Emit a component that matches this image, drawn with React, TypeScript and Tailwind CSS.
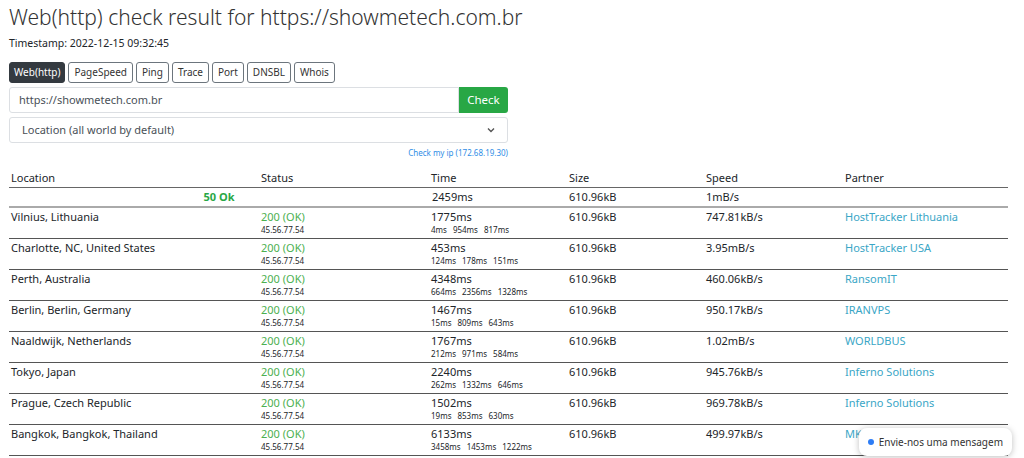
import React from 'react';

type Row = {
  location: string;
  time: string;
  parts: string[];
  speed: string;
  partner: string;
};

const rows: Row[] = [
  { location: 'Vilnius, Lithuania', time: '1775ms', parts: ['4ms', '954ms', '817ms'], speed: '747.81kB/s', partner: 'HostTracker Lithuania' },
  { location: 'Charlotte, NC, United States', time: '453ms', parts: ['124ms', '178ms', '151ms'], speed: '3.95mB/s', partner: 'HostTracker USA' },
  { location: 'Perth, Australia', time: '4348ms', parts: ['664ms', '2356ms', '1328ms'], speed: '460.06kB/s', partner: 'RansomIT' },
  { location: 'Berlin, Berlin, Germany', time: '1467ms', parts: ['15ms', '809ms', '643ms'], speed: '950.17kB/s', partner: 'IRANVPS' },
  { location: 'Naaldwijk, Netherlands', time: '1767ms', parts: ['212ms', '971ms', '584ms'], speed: '1.02mB/s', partner: 'WORLDBUS' },
  { location: 'Tokyo, Japan', time: '2240ms', parts: ['262ms', '1332ms', '646ms'], speed: '945.76kB/s', partner: 'Inferno Solutions' },
  { location: 'Prague, Czech Republic', time: '1502ms', parts: ['19ms', '853ms', '630ms'], speed: '969.78kB/s', partner: 'Inferno Solutions' },
  { location: 'Bangkok, Bangkok, Thailand', time: '6133ms', parts: ['3458ms', '1453ms', '1222ms'], speed: '499.97kB/s', partner: 'MK Solutions' },
];

const tabs = ['Web(http)', 'PageSpeed', 'Ping', 'Trace', 'Port', 'DNSBL', 'Whois'];

const App: React.FC = () => {
  return (
    <div className="relative h-[458px] overflow-hidden bg-white pl-[9px] text-[#212529]" style={{ fontFamily: '"Noto Sans", "Open Sans", sans-serif' }}>
      <h3 className="pt-[2px] text-[21px] font-light leading-[30px] text-[#333]">Web(http) check result for https://showmetech.com.br</h3>
      <div className="mt-[3px] text-[10.5px] leading-[16px]">Timestamp: 2022-12-15 09:32:45</div>

      <div className="mt-[11px] flex gap-[3px]">
        {tabs.map((t, i) => (
          <button
            key={t}
            className={
              i === 0
                ? 'h-[21px] rounded-[3px] border border-[#343a40] bg-[#343a40] px-[4px] text-[10px] text-white'
                : 'h-[21px] rounded-[3px] border border-[#6c757d] bg-white px-[5px] text-[10px] text-[#333]'
            }
          >
            {t}
          </button>
        ))}
      </div>

      <div className="w-[499px]">
        <div className="mt-[4px] flex h-[26px]">
          <div className="flex flex-1 items-center rounded-l-[3px] border border-[#dcdfe3] px-[9px] text-[11px] text-[#495057]">https://showmetech.com.br</div>
          <button className="w-[49px] rounded-r-[3px] bg-[#28a745] text-[11.5px] text-white">Check</button>
        </div>
        <div className="mt-[4px] flex h-[26px] items-center justify-between rounded-[3px] border border-[#dcdfe3] px-[12px] text-[11px] text-[#495057]">
          <span>Location (all world by default)</span>
          <svg width="8" height="6" viewBox="0 0 8 6"><path d="M1 1.5l3 3 3-3" fill="none" stroke="#555" strokeWidth="1.4" /></svg>
        </div>
        <div className="mt-[4px] text-right text-[8px] leading-[12px] text-[#2f8ee6]">Check my ip (172.68.19.30)</div>
      </div>

      <table className="mt-[10px] w-[999px] table-fixed border-collapse text-[11px]">
        <colgroup>
          <col className="w-[250px]" />
          <col className="w-[170px]" />
          <col className="w-[138px]" />
          <col className="w-[137px]" />
          <col className="w-[139px]" />
          <col className="w-[165px]" />
        </colgroup>
        <thead>
          <tr className="border-b border-[#666]">
            {['Location', 'Status', 'Time', 'Size', 'Speed', 'Partner'].map(h => (
              <th key={h} className="h-[18px] px-[2px] pb-[1px] text-left align-bottom text-[11px] font-normal leading-[16px]">{h}</th>
            ))}
          </tr>
        </thead>
        <tbody>
          <tr className="border-b-2 border-[#aaa]">
            <td colSpan={2} className="h-[20px] text-center font-bold text-[#28a745]">50 Ok</td>
            <td className="px-[3px]">2459ms</td>
            <td className="px-[2px]">610.96kB</td>
            <td className="px-[2px]">1mB/s</td>
            <td></td>
          </tr>
          {rows.map(r => (
            <tr key={r.location} className="h-[31px] border-b border-[#555]">
              <td className="px-[2px] pt-[1px] align-top leading-[16px]">{r.location}</td>
              <td className="px-[2px] pt-[1px] align-top leading-[16px]">
                <div className="text-[#4cb050]">200 (OK)</div>
                <div className="text-[8px] leading-[10px]">45.56.77.54</div>
              </td>
              <td className="px-[2px] pt-[1px] align-top leading-[16px]">
                <div>{r.time}</div>
                <div className="flex gap-[6px] text-[8px] leading-[10px]">
                  {r.parts.map((p, i) => (
                    <span key={i}>{p}</span>
                  ))}
                </div>
              </td>
              <td className="px-[2px] pt-[1px] align-top leading-[16px]">610.96kB</td>
              <td className="px-[2px] pt-[1px] align-top leading-[16px]">{r.speed}</td>
              <td className="px-[2px] pt-[1px] align-top leading-[16px] text-[#3aa6c6]">{r.partner}</td>
            </tr>
          ))}
        </tbody>
      </table>

      <div className="absolute bottom-[2px] right-[12px] flex h-[28px] items-center gap-[5px] rounded-[8px] bg-white px-[9px] text-[10px] text-[#333] shadow-[0_1px_6px_rgba(0,0,0,0.25)]">
        <span className="h-[6px] w-[6px] rounded-full bg-[#2d7df6]"></span>
        Envie-nos uma mensagem
      </div>
    </div>
  );
};

export default App;
